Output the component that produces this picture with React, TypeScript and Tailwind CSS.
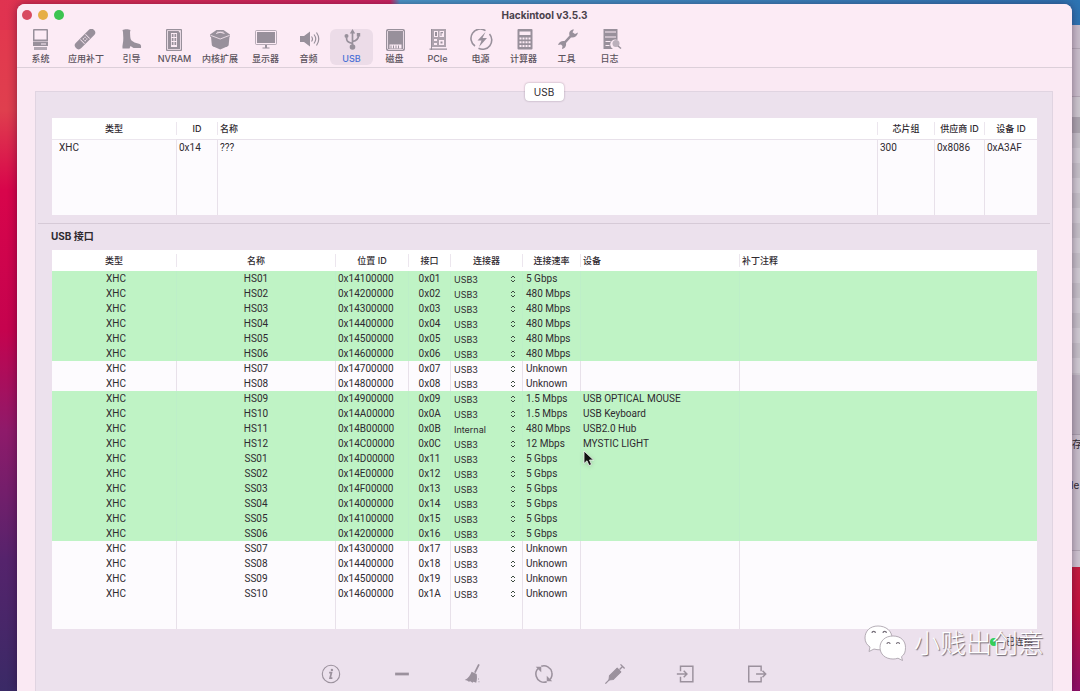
import { useState } from 'react';
import type { ReactNode } from 'react';
import clsx from 'clsx';

type Tool = { label: string; wide?: boolean; icon: ReactNode };

const TOOLS: Tool[] = [
  {
    label: '系统',
    icon: (
      <>
        <path fillRule="evenodd" d="M5 0h13a1 1 0 0 1 1 1v11H4V1a1 1 0 0 1 1-1Zm.5 1.500v9h12v-9Z" />
        <path fillRule="evenodd" d="M4 12.500h15v4.500H4Zm8 2v1h5v-1Z" />
        <path d="M5 18h13v3H5z" opacity=".75" />
      </>
    ),
  },
  {
    label: '应用补丁',
    wide: true,
    icon: (
      <g transform="rotate(-45 11 10)">
        <path
          fillRule="evenodd"
          d="M2 6.200h18a3.800 3.800 0 0 1 0 7.600H2a3.800 3.800 0 0 1 0-7.600Zm5 .8v6h.8V7Zm7.200 0v6h.8V7Zm-4.900 1.200v1.200h1.200V8.200Zm2.400 0v1.200h1.200V8.200Zm-2.400 2.500v1.200h1.200v-1.200Zm2.400 0v1.200h1.200v-1.200Z"
        />
      </g>
    ),
  },
  {
    label: '引导',
    icon: (
      <path d="M2.500 1c2-1 6-1 8 0l-.5 2c.3 4 0 6.500 1.500 8.500 2 1.500 4 2.500 6.500 3 2.500.5 3.500 1.500 3 4.500h-7.500L10.500 17 9.500 19.500H2.500C2 16.500 3.500 13 3.300 9c0-2-.3-4-.3-6Z" />
    ),
  },
  {
    label: 'NVRAM',
    icon: (
      <>
        <path fillRule="evenodd" d="M4 0h14a1 1 0 0 1 1 1v20a1 1 0 0 1-1 1H4a1 1 0 0 1-1-1V1a1 1 0 0 1 1-1Zm.2 1.200v19.600h13.600V1.200Z" />
        <path
          fillRule="evenodd"
          d="M5 2h10.500L17 4v16H5Zm3 2v14h6V4Zm.8 1h1.700v3H8.800Zm2.700 0h1.700v3h-1.700Zm-2.700 4h1.700v3H8.800Zm2.700 0h1.700v3h-1.700Zm-2.700 4h1.700v3H8.800Zm2.700 0h1.700v3h-1.700Z"
        />
      </>
    ),
  },
  {
    label: '内核扩展',
    wide: true,
    icon: (
      <>
        <path d="M3 7.500h18.500l-.8 8.200a2 2 0 0 1-1 1.500L12.200 20.500 4.800 17.200a2 2 0 0 1-1-1.500Z" />
        <path d="M2 5.500 8.500 1h7l6.500 4.500v2L12.200 11.500 2 7.500Z" />
        <path d="M2.500 6.300 12.200 10l9.500-3.700M8 4.500q4.200-2.500 8.500 0M9 3.200h6.500" fill="none" stroke="#fbeaf4" strokeWidth=".8" />
      </>
    ),
  },
  {
    label: '显示器',
    icon: (
      <>
        <rect x="1.500" y="1.500" width="21" height="14" rx="1" fill="none" stroke="currentColor" opacity=".7" />
        <path d="M3 3h18v11H3zM11 16h2v2.500h2.500v1h-7v-1H11z" />
      </>
    ),
  },
  {
    label: '音频',
    icon: (
      <>
        <path d="M3 7h4l6-4.500v15L7 13H3Z" />
        <path d="M14.500 7.500q2 2.500 0 5M17 5.500q3.500 4.500 0 9M19.500 3.500q4.500 6.500 0 13" fill="none" stroke="currentColor" strokeWidth="1.200" />
      </>
    ),
  },
  {
    label: 'USB',
    icon: (
      <>
        <path d="M12.500 4v13M12.500 14.500c-5-1-6-2.500-6-6M12.500 12.500c5-1 6-3 6-6" fill="none" stroke="currentColor" strokeWidth="1.700" />
        <path d="M12.500 0l2.700 4.500H9.800zM16.800 4h3.400v3.400h-3.400z" />
        <circle cx="6.500" cy="7" r="2" />
        <circle cx="12.500" cy="18" r="2.800" />
      </>
    ),
  },
  {
    label: '磁盘',
    icon: (
      <>
        <path fillRule="evenodd" d="M5 0h15a2 2 0 0 1 2 2v18a2 2 0 0 1-2 2H5a2 2 0 0 1-2-2V2a2 2 0 0 1 2-2Zm.3 1.200L4.200 2.500v17l1.100 1.300h14.400l1.100-1.300v-17l-1.100-1.300Z" />
        <path fillRule="evenodd" d="M5 2h15v18H5Zm1.500 13.500v4h12v-4Z" />
        <path d="M8 16.500v3M10.500 16.500v3M13 16.500v3M15.500 16.500v3" stroke="currentColor" />
      </>
    ),
  },
  {
    label: 'PCIe',
    icon: (
      <>
        <path
          fillRule="evenodd"
          d="M5.500 0H20v18H5.500Zm2.500 2v6h4V2Zm5.500 0v6h4.500V2ZM8 10v2h3v-2Zm0 4v2h3v-2Zm5-3v5h5v-5Z"
          opacity=".8"
        />
        <path d="M9 3h2v4H9zM14.500 3H17v1.300h-1.500V7h-1zM14.500 12.500h2v2h-2zM5 0h1v21H5zM3.500 19.500H21v1.300H3.500z" />
      </>
    ),
  },
  {
    label: '电源',
    icon: (
      <>
        <path d="M16.500 1.700A9.200 9.200 0 0 0 6 17M9.500 19.300A9.200 9.200 0 0 0 20.500 5" fill="none" stroke="currentColor" strokeWidth="1.600" />
        <path d="M16.500 3 8.500 11.500h4L10 18 18 9h-4.500Z" />
      </>
    ),
  },
  {
    label: '计算器',
    icon: (
      <path
        fillRule="evenodd"
        d="M6.500 0h13a1 1 0 0 1 1 1v18.500a1 1 0 0 1-1 1h-13a1 1 0 0 1-1-1V1a1 1 0 0 1 1-1Zm1 2.500V6h11V2.500Zm0 6v2h2v-2Zm3 0v2h2v-2Zm3 0v2h2v-2Zm3 0v2h2v-2Zm-9 3.700v2h2v-2Zm3 0v2h2v-2Zm3 0v2h2v-2Zm3 0v2h2v-2Zm-9 3.800v2h2v-2Zm3 0v2h2v-2Zm3 0v2h2v-2Zm3 0v2h2v-2Z"
      />
    ),
  },
  {
    label: '工具',
    icon: (
      <path d="M19 .5c-3.500 0-5.500 2.500-4.500 6l-5 5.500c-3-.5-5.500 1-6.500 4l3-.5 1.500 1.500-.5 3c3-.5 4.500-3 4-6l5-5.500c3.500.5 6.500-1.500 7-5l-3 1.500-2.500-1.700Z" />
    ),
  },
  {
    label: '日志',
    icon: (
      <>
        <path fillRule="evenodd" d="M5.500 0h14v11a5 5 0 0 0-4.500 9H5.500ZM7 2.500v1h11v-1ZM7 7.500v1h11v-1ZM7.500 12v1h5v-1Zm0 4v1h4v-1Z" />
        <circle cx="18" cy="14.500" r="3.500" opacity=".65" />
        <path d="m20 17 3 2.500" stroke="currentColor" strokeWidth="1.500" />
      </>
    ),
  },
];

type Port = {
  name: string;
  location: string;
  port: string;
  connector: string;
  speed: string;
  device?: string;
  active: boolean;
};

const port = (
  name: string,
  location: string,
  id: string,
  speed: string,
  device?: string,
  connector = 'USB3'
): Port => ({ name, location, port: id, connector, speed, device, active: speed !== 'Unknown' });

const PORTS: Port[] = [
  port('HS01', '0x14100000', '0x01', '5 Gbps'),
  port('HS02', '0x14200000', '0x02', '480 Mbps'),
  port('HS03', '0x14300000', '0x03', '480 Mbps'),
  port('HS04', '0x14400000', '0x04', '480 Mbps'),
  port('HS05', '0x14500000', '0x05', '480 Mbps'),
  port('HS06', '0x14600000', '0x06', '480 Mbps'),
  port('HS07', '0x14700000', '0x07', 'Unknown'),
  port('HS08', '0x14800000', '0x08', 'Unknown'),
  port('HS09', '0x14900000', '0x09', '1.5 Mbps', 'USB OPTICAL MOUSE'),
  port('HS10', '0x14A00000', '0x0A', '1.5 Mbps', 'USB Keyboard'),
  port('HS11', '0x14B00000', '0x0B', '480 Mbps', 'USB2.0 Hub', 'Internal'),
  port('HS12', '0x14C00000', '0x0C', '12 Mbps', 'MYSTIC LIGHT'),
  port('SS01', '0x14D00000', '0x11', '5 Gbps'),
  port('SS02', '0x14E00000', '0x12', '5 Gbps'),
  port('SS03', '0x14F00000', '0x13', '5 Gbps'),
  port('SS04', '0x14000000', '0x14', '5 Gbps'),
  port('SS05', '0x14100000', '0x15', '5 Gbps'),
  port('SS06', '0x14200000', '0x16', '5 Gbps'),
  port('SS07', '0x14300000', '0x17', 'Unknown'),
  port('SS08', '0x14400000', '0x18', 'Unknown'),
  port('SS09', '0x14500000', '0x19', 'Unknown'),
  port('SS10', '0x14600000', '0x1A', 'Unknown'),
];

const ACTIONS: { label: string; icon: ReactNode }[] = [
  {
    label: '信息',
    icon: (
      <>
        <circle cx="12" cy="12" r="9.500" />
        <circle cx="13" cy="7.500" r="1.300" fill="currentColor" stroke="none" />
        <path d="M10 10.500h2.500l-1.500 6h2.500" strokeWidth="1.900" />
      </>
    ),
  },
  { label: '移除', icon: <path d="M4.500 12h15" strokeWidth="3" /> },
  {
    label: '清理',
    icon: (
      <>
        <path d="m18.500 1.500-4.500 9" strokeWidth="1.900" />
        <path d="m10.500 9.500 5.500 2.500c.5 3 .5 6-.5 9.500l-3-1-1 1-2.500-1.500-1.500.5-2-1.500L3 18.500c4-2 6-5 7.500-9Z" fill="currentColor" stroke="none" />
        <path d="M17.500 17.500h1M18 20.500h1" />
      </>
    ),
  },
  {
    label: '刷新',
    icon: (
      <>
        <path d="M3.500 14.500A8.800 8.800 0 0 1 5.500 6M9 3.500a8.800 8.800 0 0 1 11.500 6.500M20.500 10a8.800 8.800 0 0 1-2 8M15 20.500A8.800 8.800 0 0 1 3.500 14.500" strokeWidth="1.700" />
        <path d="M3 4h6v6ZM21 20h-6v-6Z" fill="currentColor" stroke="none" />
      </>
    ),
  },
  {
    label: '注入',
    icon: (
      <>
        <path d="m1.500 22.500 6-6M17 7l3.500-3.500M18 1.500l4.500 4.500M14 5.500l4.500 4.500" strokeWidth="1.500" />
        <path d="m14 6 4 4-8 8-4.500.5.500-4.500Z" fill="currentColor" />
      </>
    ),
  },
  {
    label: '导入',
    icon: <path d="M6 9V3.500h13.500v17H6V15M2 12h11M9.500 8.500 13 12l-3.500 3.500" strokeWidth="1.600" />,
  },
  {
    label: '导出',
    icon: <path d="M16.500 9V3.500H3v17h13.500V15M11 12h10M18 8.500l3.500 3.500-3.500 3.500" strokeWidth="1.600" />,
  },
];

export default function App() {
  return (
    <div className="flex h-screen overflow-hidden pt-1 pl-[17px] font-[Inter,'Noto_Sans_CJK_SC',sans-serif] text-[#2f2a30] [background:linear-gradient(90deg,#e03350,#cf2460_390px,#4a9bcc_400px,#2d74b3)_top/100%_30px_no-repeat,linear-gradient(#e2384e_30px,#df3f4e_110px,#d8054b_190px,#c5034e_330px,#8f1a6a_430px,#55236c_560px,#3a2a66)_left/50%_100%_no-repeat,linear-gradient(#c51f3f_560px,#c3123f_610px,#8d0f68)_right/50%_100%_no-repeat]">
      <main className="relative flex min-w-0 flex-1 flex-col rounded-t-lg bg-[#fae9f3] shadow-[0_0_10px_rgba(40,0,40,0.45)]">
        <TitleBar />
        <Toolbar />
        <section className="mt-[23px] mr-[19px] ml-[18px] flex flex-1 flex-col border border-b-0 border-[#e0d4e1] bg-[#ece1ed]">
          <button className="-mt-[9px] h-[18px] w-[39px] self-center rounded bg-white text-[10px] leading-4 shadow-[0_0_2px_rgba(60,40,60,0.45)]">
            USB
          </button>
          <div className="mt-[17px] mr-[15px] ml-4">
            <ControllerTable />
          </div>
          <hr className="mx-0.5 mt-2 border-[#d6cad7]" />
          <div className="mr-[15px] ml-4">
            <h2 className="-ml-px pt-1 pb-[5px] text-[10px] leading-[17px] font-bold">USB 接口</h2>
            <PortTable />
            <div className="flex h-[26px] items-center justify-end gap-2 pr-1 text-[9px]">
              <span className="size-2 rounded-full bg-[#35cf55]" />
              <span>已连接</span>
            </div>
          </div>
          <div className="mt-1 flex justify-center text-[#9b919d]">
            {ACTIONS.map((action) => (
              <button key={action.label} aria-label={action.label} className="flex w-[71px] justify-center py-1">
                <svg viewBox="0 0 24 24" className="size-[22px]" fill="none" stroke="currentColor" strokeWidth="1.200">
                  {action.icon}
                </svg>
              </button>
            ))}
          </div>
        </section>
        <Cursor />
        <Watermark />
      </main>
      <BackWindow />
    </div>
  );
}

function TitleBar() {
  return (
    <header className="flex h-[25px] items-center rounded-t-lg bg-[#fcebf5] px-[5px] pb-[3px]">
      <div className="flex flex-1 gap-1.5">
        <button aria-label="关闭" className="size-2.5 rounded-full bg-[#d84a60]" />
        <button aria-label="最小化" className="size-2.5 rounded-full bg-[#e6ae45]" />
        <button aria-label="缩放" className="size-2.5 rounded-full bg-[#3cc451]" />
      </div>
      <h1 className="text-[10px] leading-4 font-bold text-[#4a414b]">Hackintool v3.5.3</h1>
      <div className="flex-1" />
    </header>
  );
}

function Toolbar() {
  const [selected, setSelected] = useState('USB');

  return (
    <nav className="flex border-b border-[#dccfd9] bg-[#fcebf5] pb-[2px] pl-0.5">
      {TOOLS.map((tool) => (
        <button
          key={tool.label}
          onClick={() => setSelected(tool.label)}
          className={clsx(
            'flex shrink-0 flex-col items-center rounded-md',
            tool.wide ? 'w-12' : 'w-[43px]',
            selected === tool.label && 'bg-[#ecdce8]'
          )}
        >
          <svg viewBox="0 0 24 24" className="size-6 text-[#98909b]" fill="currentColor">
            {tool.icon}
          </svg>
          <span
            className={clsx(
              'text-[9px] leading-3 font-medium whitespace-nowrap',
              selected === tool.label ? 'text-[#4a6fd6]' : 'text-[#5a525c]'
            )}
          >
            {tool.label}
          </span>
        </button>
      ))}
    </nav>
  );
}

function Th({ children, first, align = 'center' }: { children: ReactNode; first?: boolean; align?: 'left' | 'center' }) {
  return (
    <th className="h-[21px] p-0 font-normal">
      <div
        className={clsx(
          'h-[13px] overflow-hidden text-[9px] leading-[13px] font-medium whitespace-nowrap',
          !first && 'border-l border-[#ece6ee]',
          align === 'left' ? 'pl-0.5 text-left' : 'text-center'
        )}
      >
        {children}
      </div>
    </th>
  );
}

function Td({ children, className, active }: { children?: ReactNode; className?: string; active?: boolean }) {
  return (
    <td
      className={clsx(
        'h-[15px] border-l p-0 leading-[15px] whitespace-nowrap first:border-l-0',
        active ? 'border-[#bdefc8]' : 'border-[#e8e1ea]',
        className
      )}
    >
      {children}
    </td>
  );
}

function ControllerTable() {
  return (
    <table className="w-full table-fixed border-separate border-spacing-0 bg-[#fdfbfe] text-[10px]">
      <colgroup>
        <col className="w-[124px]" />
        <col className="w-[41px]" />
        <col />
        <col className="w-[57px]" />
        <col className="w-[50px]" />
        <col className="w-[53px]" />
      </colgroup>
      <thead className="bg-white">
        <tr>
          <Th first>类型</Th>
          <Th>ID</Th>
          <Th align="left">名称</Th>
          <Th>芯片组</Th>
          <Th>供应商 ID</Th>
          <Th>设备 ID</Th>
        </tr>
      </thead>
      <tbody className="font-[Roboto,'Noto_Sans_CJK_SC',sans-serif]">
        <tr>
          <td className="h-4 border-t border-[#ece6ee] p-0 pl-[7px]">XHC</td>
          <td className="border-t border-l border-[#e8e1ea] p-0 pl-0.5">0x14</td>
          <td className="border-t border-l border-[#e8e1ea] p-0 pl-0.5">???</td>
          <td className="border-t border-l border-[#e8e1ea] p-0 pl-0.5">300</td>
          <td className="border-t border-l border-[#e8e1ea] p-0 pl-0.5">0x8086</td>
          <td className="border-t border-l border-[#e8e1ea] p-0 pl-0.5">0xA3AF</td>
        </tr>
        <tr className="h-[60px]">
          <Td />
          <Td />
          <Td />
          <Td />
          <Td />
          <Td />
        </tr>
      </tbody>
    </table>
  );
}

function PortTable() {
  return (
    <table className="w-full table-fixed border-separate border-spacing-0 bg-[#fdfbfe] text-[10px]">
      <colgroup>
        <col className="w-[124px]" />
        <col className="w-[159px]" />
        <col className="w-[73px]" />
        <col className="w-[42px]" />
        <col className="w-[72px]" />
        <col className="w-[58px]" />
        <col className="w-[159px]" />
        <col />
      </colgroup>
      <thead className="bg-white">
        <tr>
          <Th first>类型</Th>
          <Th>名称</Th>
          <Th>位置 ID</Th>
          <Th>接口</Th>
          <Th>连接器</Th>
          <Th>连接速率</Th>
          <Th align="left">设备</Th>
          <Th align="left">补丁注释</Th>
        </tr>
      </thead>
      <tbody className="font-[Roboto,'Noto_Sans_CJK_SC',sans-serif]">
        {PORTS.map((p) => (
          <tr key={p.name} className={p.active ? 'bg-[#bff3c5]' : undefined}>
            <Td active={p.active} className="pl-1 text-center">XHC</Td>
            <Td active={p.active} className="text-center">{p.name}</Td>
            <Td active={p.active} className="pl-0.5">{p.location}</Td>
            <Td active={p.active} className="text-center">{p.port}</Td>
            <Td active={p.active}>
              <ConnectorSelect name={p.name} value={p.connector} />
            </Td>
            <Td active={p.active} className="pl-[3px]">{p.speed}</Td>
            <Td active={p.active} className="pl-0.5">{p.device}</Td>
            <Td active={p.active} />
          </tr>
        ))}
        <tr className="h-7">
          {Array.from({ length: 8 }, (_, i) => (
            <Td key={i} />
          ))}
        </tr>
      </tbody>
    </table>
  );
}

function ConnectorSelect({ name, value }: { name: string; value: string }) {
  return (
    <div className="flex h-[15px] items-center pr-1.5 pl-[3px]">
      <select
        aria-label={`${name} 连接器`}
        defaultValue={value}
        className="h-[15px] min-w-0 flex-1 appearance-none bg-transparent pt-0.5 font-[Inter,sans-serif] text-[9px] leading-[13px] outline-none"
      >
        <option>USB2</option>
        <option>USB3</option>
        <option>Internal</option>
      </select>
      <svg viewBox="0 0 6 8" className="h-2 w-1.5" fill="none" stroke="#3d4a40" strokeWidth="1">
        <path d="M1 3 3 1l2 2M1 5l2 2 2-2" />
      </svg>
    </div>
  );
}

function Cursor() {
  return (
    <svg viewBox="0 0 12 18" className="absolute top-[446px] left-[566px] h-[18px] w-3 drop-shadow-sm" aria-hidden="true">
      <path d="M1 1v12.500l3-2.700 2 4.700 2.500-1-2-4.500h4Z" fill="#111" stroke="#f4f4f4" strokeWidth=".8" />
    </svg>
  );
}

function Watermark() {
  return (
    <div className="pointer-events-none absolute right-[28px] bottom-[28px] flex items-center gap-2 text-white">
      <svg viewBox="0 0 44 38" className="h-[38px] w-11" fill="#fff" stroke="#a39ba5" strokeWidth=".8">
        <path d="M16 1C8 1 3 6 3 13c0 4 2 7 5 9l-1 4.500 5-2.500c2 .6 4 .8 6 .8C25 24 30 19 30 13 30 6 24 1 16 1Z" />
        <path d="M31 11c-8 0-13 5-13 11.500S23 34 31 34c2 0 3-.2 5-.8l4.500 2.300-1-3.800c3-2 4-5 4-9.200C43.500 16 39 11 31 11Z" />
        <g fill="none" stroke="#77707a" strokeWidth="1.200">
          <path d="M10 8a1.700 1.700 0 0 1 3.400 0M21 8a1.700 1.700 0 0 1 3.400 0M25 19a1.500 1.500 0 0 1 3 0M34.500 19a1.500 1.500 0 0 1 3 0" />
        </g>
      </svg>
      <span className="text-[26px] leading-9 font-light [text-shadow:1px_1px_1px_#6d6570]">小贱出创意</span>
    </div>
  );
}

// sliver of the window that sits behind this one
function BackWindow() {
  return (
    <aside className="mt-[21px] flex h-[542px] w-2 shrink-0 flex-col overflow-hidden bg-[#c9c0cc] text-[10px] leading-4 whitespace-nowrap">
      <div className="h-[23px] shrink-0 bg-[#c9bdcb]" />
      <div className="h-12 shrink-0 border-t border-[#b3a8b5] bg-[#cabfcc]" />
      <div className="h-[21px] shrink-0 border-t border-[#b3a8b5] bg-[#cdc8cf]" />
      <div className="h-4 shrink-0 bg-[#aba5ae]" />
      <div className="h-[242px] shrink-0 bg-[repeating-linear-gradient(#c5c0c8_0_15px,#d0cbd3_15px_30px)]" />
      <div className="h-[60px] shrink-0 border-b border-[#a89fac] bg-[#bab1be]" />
      <span className="pt-px">存</span>
      <span className="mt-[25px] -ml-px">le</span>
      <div className="flex-1" />
      <div className="h-[17px] shrink-0 border-t border-[#b3a8b5] bg-[#cfc5d1]" />
    </aside>
  );
}
